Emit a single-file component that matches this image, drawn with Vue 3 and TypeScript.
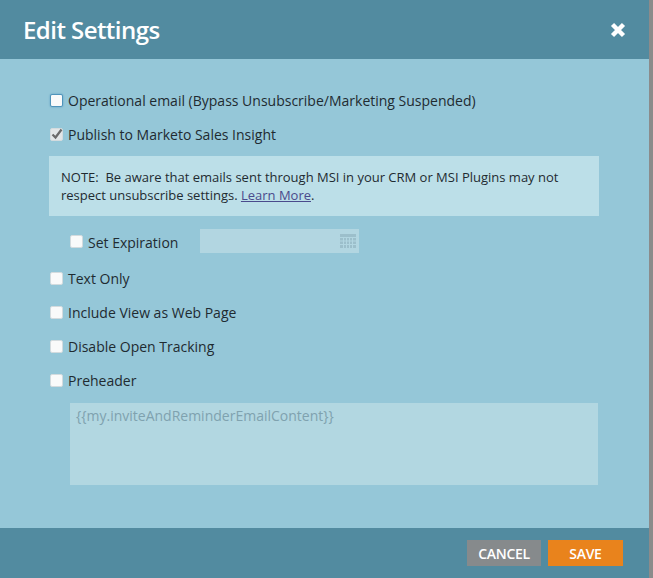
<script setup lang="ts">
const opts = ['Text Only', 'Include View as Web Page', 'Disable Open Tracking', 'Preheader']
</script>

<template>
  <div class="dialog">
    <header class="head">
      <h1>Edit Settings</h1>
      <svg class="close" width="16" height="16" viewBox="0 0 16 16"><path d="M2.5 2.5L13.5 13.5M13.5 2.5L2.5 13.5" stroke="#fff" stroke-width="4.4" /></svg>
    </header>
    <main class="body">
      <label class="row first"><span class="box focus"></span>Operational email (Bypass Unsubscribe/Marketing Suspended)</label>
      <label class="row second"><span class="box checked"><svg width="13" height="13" viewBox="0 0 13 13"><path d="M2.5 6.5L5.5 9.5L11.5 1.5" fill="none" stroke="#6a6a6a" stroke-width="2.2" /></svg></span>Publish to Marketo Sales Insight</label>
      <div class="note">NOTE:&nbsp; Be aware that emails sent through MSI in your CRM or MSI Plugins may not respect unsubscribe settings. <a>Learn More</a>.</div>
      <div class="expire">
        <span class="box"></span><span class="exp-label">Set Expiration</span>
        <div class="date">
          <svg width="16" height="14" viewBox="0 0 16 14"><path d="M0 0H16V3H0ZM0 4H16V14H0Z" fill="#9cbfcb" /><path d="M0 7H16M0 10.5H16M3.5 4V14M6.5 4V14M9.5 4V14M12.5 4V14" stroke="#b2d6e1" stroke-width="1" /></svg>
        </div>
      </div>
      <label v-for="o in opts" :key="o" class="row opt"><span class="box"></span>{{ o }}</label>
      <div class="pre">{{ '{' + '{my.inviteAndReminderEmailContent}' + '}' }}</div>
    </main>
    <footer class="foot">
      <button class="cancel">CANCEL</button>
      <button class="save">SAVE</button>
    </footer>
  </div>
</template>

<style>
html, body { margin: 0; background: #8b8b8b; }
</style>
<style scoped>
.dialog { width: 649px; height: 578px; display: flex; flex-direction: column; font-family: "Open Sans", sans-serif; color: #1f2b31; background: #95c7d8; }
.head { height: 59px; box-sizing: border-box; background: #528ba0; display: flex; align-items: center; justify-content: space-between; padding: 0 23px 0 23px; }
h1 { margin: 0; font-size: 24px; font-weight: 600; color: #fff; letter-spacing: -0.55px; }
.close { display: block; }
.body { flex: 1; padding: 31px 0 0 50px; display: flex; flex-direction: column; align-items: flex-start; }
.row { display: flex; align-items: center; font-size: 14px; height: 20px; }
.box { width: 13px; height: 13px; box-sizing: border-box; border: 1px solid #d3dbde; border-radius: 2px; background: #f9fafa; margin-right: 5px; position: relative; flex: none; }
.box.focus { border-color: #4f94bb; box-shadow: 0 0 2px #5a9cc2; }
.box.checked { background: #e2e6e7; }
.box svg { position: absolute; left: -1px; top: -1px; }
.second { margin-top: 14px; }
.note { width: 550px; height: 60px; box-sizing: border-box; margin-top: 12px; margin-left: -1px; padding: 12px 12px; background: #bcdfe8; font-size: 13px; line-height: 18px; letter-spacing: -0.005px; }
.note a { color: #4a4a8c; text-decoration: underline; }
.expire { display: flex; align-items: center; margin: 13px 0 0 20px; font-size: 14px; height: 24px; }
.exp-label { width: 112px; padding-top: 2px; }
.date { width: 159px; height: 24px; background: #b2d6e1; display: flex; align-items: center; justify-content: flex-end; padding-right: 3px; box-sizing: border-box; }
.opt { margin-top: 14px; }
.expire + .opt { margin-top: 15px; }
.pre { width: 528px; height: 82px; box-sizing: border-box; margin: 13px 0 0 20px; padding: 3px 6px; background: #b2d7e1; color: #7fa2af; font-size: 14px; }
.foot { height: 50px; box-sizing: border-box; background: #528ba0; display: flex; justify-content: flex-end; align-items: center; gap: 7px; padding: 0 26px 0 0; }
button { border: 0; height: 26px; font-family: inherit; font-size: 14px; font-weight: 600; letter-spacing: -0.3px; color: #fff; padding: 0; }
.cancel { width: 74px; background: #868a8c; }
.save { width: 75px; background: #e9831c; }
</style>
